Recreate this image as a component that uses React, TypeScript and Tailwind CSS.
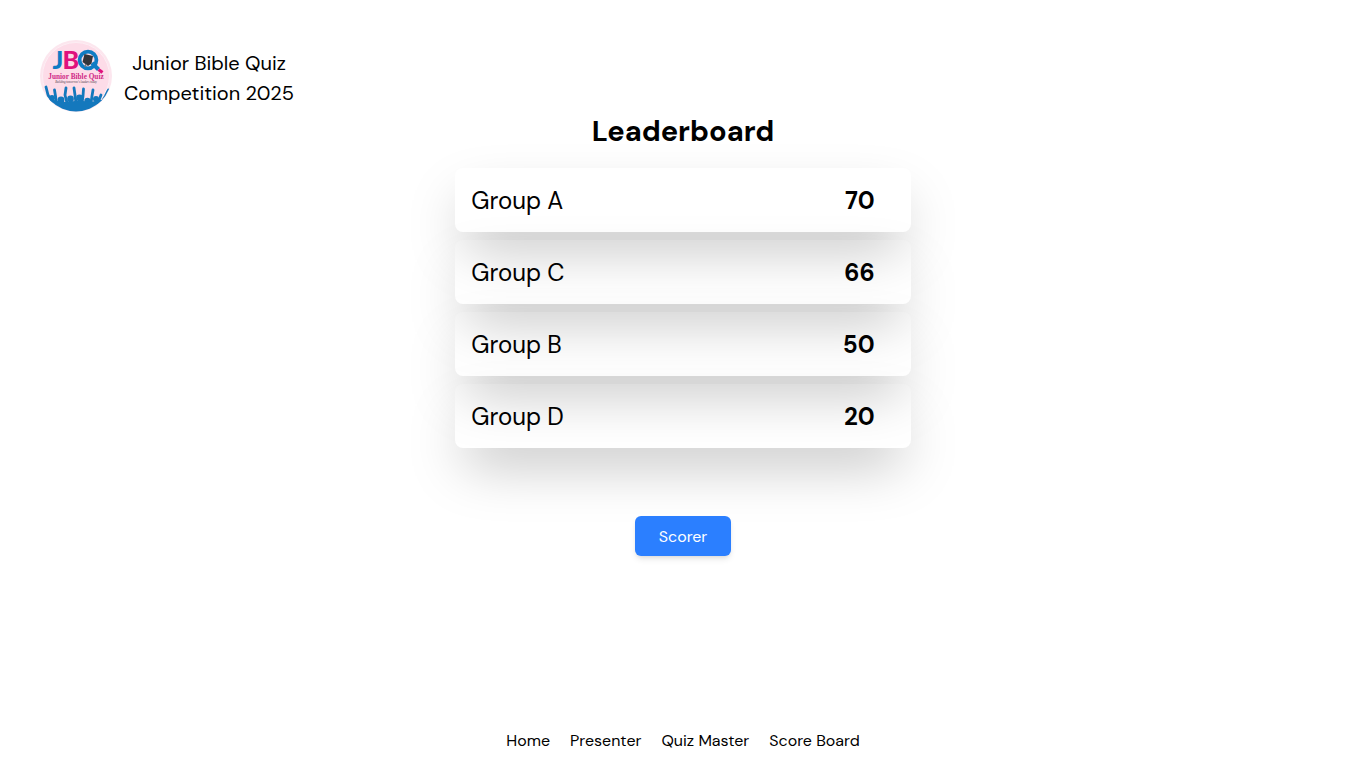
import React from 'react';

const standings = [
  { group: 'Group A', score: 70 },
  { group: 'Group C', score: 66 },
  { group: 'Group B', score: 50 },
  { group: 'Group D', score: 20 },
];

const links = ['Home', 'Presenter', 'Quiz Master', 'Score Board'];

function Logo() {
  return (
    <svg viewBox="0 0 72 72" className="size-18 shrink-0" role="img" aria-label="Junior Bible Quiz logo">
      <defs>
        <clipPath id="disc">
          <circle cx="36" cy="36" r="35.5" />
        </clipPath>
      </defs>
      <circle cx="36" cy="36" r="36" fill="#fce6ee" />
      <circle cx="36" cy="36" r="33.5" fill="#fddce8" stroke="#fdeef4" strokeWidth="1" />
      <text x="12.5" y="29" fontSize="25" fontWeight="900" fill="#0f7cc4" fontFamily="Lato, sans-serif">J</text>
      <text x="22.5" y="29" fontSize="25" fontWeight="900" fill="#e0127d" fontFamily="Lato, sans-serif">B</text>
      <circle cx="48" cy="20" r="8.4" fill="#fddfea" stroke="#0f7cc4" strokeWidth="3.8" />
      <path d="M52 23l6.5 6.5" stroke="#0f7cc4" strokeWidth="4" />
      <path d="M58.5 29.5l4 3" stroke="#e0127d" strokeWidth="3.2" />
      <path d="M44.500 14l8.500 2-1.500 7.500-3.500 2.500-5.500-4z" fill="#33343a" />
      <path d="M46 24l-1 3" stroke="#77777c" strokeWidth="1.6" />
      <text x="36" y="38.7" textAnchor="middle" fontSize="7.3" fontWeight="700" fill="#cf2a86" fontFamily="Liberation Serif, serif">Junior Bible Quiz</text>
      <text x="36" y="43.2" textAnchor="middle" fontSize="3" fontStyle="italic" fill="#4b3a4a" fontFamily="Liberation Serif, serif">Building tomorrow's leaders today</text>
      <g clipPath="url(#disc)">
        <path
          d="M6 47l2 8 4 8M14.500 50l1 6 1 7M26 48l-1 7 2 8M34 48l1 7 1 8M43.500 49l-.500 7-1 7M53 50l-1 6-1 7M61 55l-3 8M68.500 50l-3 6-4 7"
          fill="none"
          stroke="#1478bd"
          strokeWidth="2.8"
          strokeLinecap="round"
          strokeLinejoin="round"
        />
        <g fill="#1478bd">
          <circle cx="12" cy="58" r="3" />
          <circle cx="21" cy="60" r="3.4" />
          <circle cx="30.500" cy="59" r="3.4" />
          <circle cx="39.500" cy="58" r="3.4" />
          <circle cx="47.500" cy="61" r="3.2" />
          <circle cx="56" cy="59" r="3" />
          <path d="M4 60l8-1 5 2 9 1 9-1 8 0 8 1 8-2 8 0v12H4z" />
        </g>
        <path d="M12 64a37 37 0 0 0 48 0" fill="none" stroke="#fdeef4" strokeWidth="0.8" />
      </g>
    </svg>
  );
}

export default function App() {
  return (
    <div className="flex min-h-screen flex-col bg-white font-['DM_Sans','Inter',sans-serif] text-black">
      <header className="flex items-center gap-3 px-10 pt-10">
        <Logo />
        <p className="pt-1 text-center text-xl leading-[30px]">
          Junior Bible Quiz
          <br />
          Competition 2025
        </p>
      </header>
      <main className="flex grow flex-col items-center">
        <h1 className="text-[29px] leading-[38px] font-bold">Leaderboard</h1>
        <ul className="mt-[18px] flex w-1/3 flex-col gap-2">
          {standings.map(({ group, score }) => (
            <li
              key={group}
              className="flex items-center justify-between rounded-lg px-4 pt-[17px] pb-[15px] text-2xl shadow-[0_25px_56px_-10px_rgb(0_0_0/0.26)]"
            >
              <span>{group}</span>
              <span className="pr-5 font-bold">{score}</span>
            </li>
          ))}
        </ul>
        <button
          type="button"
          className="mt-17 w-24 rounded-md bg-[#2b7fff] pt-[9px] pb-[7px] text-white shadow-md"
        >
          Scorer
        </button>
      </main>
      <nav className="flex justify-center gap-5 pb-[15px]">
        {links.map((label) => (
          <a key={label} href="#">
            {label}
          </a>
        ))}
      </nav>
    </div>
  );
}
